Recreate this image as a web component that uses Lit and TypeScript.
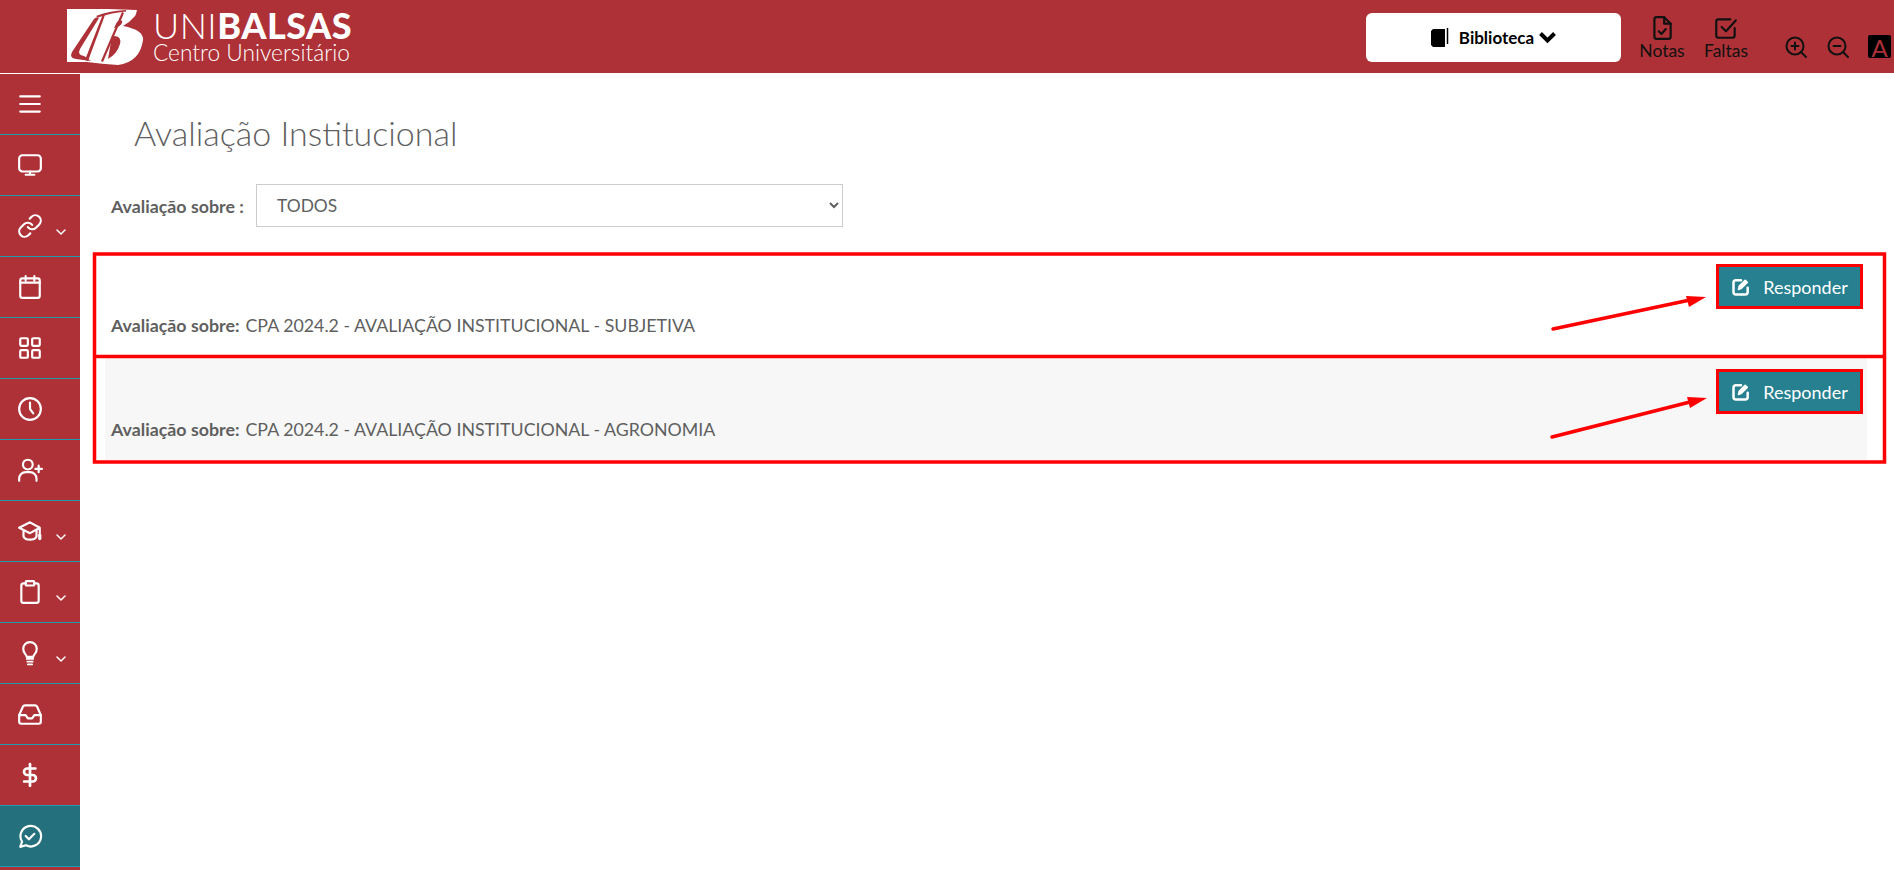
import { LitElement, html, css, svg } from 'lit';
import { customElement } from 'lit/decorators.js';

const icon = (body: unknown, size = 26) => html`<svg class="ico" width=${size} height=${size} viewBox="0 0 24 24" fill="none" stroke="currentColor" stroke-width="2" stroke-linecap="round" stroke-linejoin="round">${body}</svg>`;

const menuItems = [
  { body: svg`<path d="M3 5h18M3 12h18M3 19h18"/>` },
  { body: svg`<rect x="2" y="3" width="20" height="15" rx="3"/><path d="M12 18v3M8 21h8"/>` },
  { body: svg`<path d="M10 13a5 5 0 0 0 7.54.54l3-3a5 5 0 0 0-7.07-7.07l-1.72 1.71"/><path d="M14 11a5 5 0 0 0-7.54-.54l-3 3a5 5 0 0 0 7.07 7.07l1.71-1.71"/>`, caret: true },
  { body: svg`<rect x="3" y="4" width="18" height="18" rx="2"/><path d="M8 2v4M16 2v4M3 8h18"/>` },
  { body: svg`<rect x="3" y="3" width="7" height="7" rx="1"/><rect x="14" y="3" width="7" height="7" rx="1"/><rect x="3" y="14" width="7" height="7" rx="1"/><rect x="14" y="14" width="7" height="7" rx="1"/>` },
  { body: svg`<circle cx="12" cy="12" r="10"/><path d="M12 6v6l3 4"/>` },
  { body: svg`<circle cx="10" cy="7" r="4.5"/><path d="M2 22v-2a6 6 0 0 1 6-6h4a6 6 0 0 1 6 6v2M20 8v6M17 11h6"/>` },
  { body: svg`<path d="M21 9 12 4 2 9l10 5 9-5v7"/><path d="M6 11.5V17c2 4 10 4 12 0v-5.5"/><path d="M21 16v3" stroke-width="3"/>`, caret: true },
  { body: svg`<path d="M8 4H6a2 2 0 0 0-2 2v14a2 2 0 0 0 2 2h12a2 2 0 0 0 2-2V6a2 2 0 0 0-2-2h-2"/><rect x="8" y="2" width="8" height="4" rx="1"/>`, caret: true },
  { body: svg`<path d="M9 17.5h6M9.5 20h5M10 22.5h4" stroke-width="1.6"/><path d="M15 15.5c.2-1 .7-1.8 1.5-2.7a6.5 6.5 0 0 0 1.7-4.6A6.1 6.1 0 0 0 12 2a6.1 6.1 0 0 0-6.2 6.2c0 1.6.5 3.2 1.7 4.6.8.9 1.3 1.7 1.5 2.7z"/>`, caret: true },
  { body: svg`<path d="M22 13h-6l-2 3h-4l-2-3H2"/><path d="M5.5 5.1 2 13v6a2 2 0 0 0 2 2h16a2 2 0 0 0 2-2v-6l-3.5-7.9A2 2 0 0 0 16.7 4H7.3a2 2 0 0 0-1.8 1.1z"/>` },
  { body: svg`<path d="M12 2v20" stroke-width="2.5"/><path d="M17 6H9.5a3 3 0 0 0 0 6h5a3 3 0 0 1 0 6H6.5" stroke-width="2.5"/>` },
  { body: svg`<path d="M3 22l1.7-4.7A9.5 9.5 0 1 1 8.3 20.6z"/><path d="M8 12l3 3 5-5"/>`, active: true },
];

const rows = [
  'CPA 2024.2 - AVALIAÇÃO INSTITUCIONAL - SUBJETIVA',
  'CPA 2024.2 - AVALIAÇÃO INSTITUCIONAL - AGRONOMIA',
];

@customElement('app-root')
export class AppRoot extends LitElement {
  static styles = css`
    :host {
      display: block;
      height: 870px;
      overflow: hidden;
      position: relative;
      font-family: 'Lato', 'Noto Sans', sans-serif;
      color: #5f5f5f;
      background: #fff;
    }

    .top {
      height: 73px;
      background: #ad3137;
      display: flex;
      align-items: center;
      padding-left: 67px;
      color: #fff;
      box-sizing: border-box;
    }

    .brand {
      display: flex;
      align-items: center;
      gap: 9px;
    }

    .brand-text {
      width: 197px;
      line-height: 1;
    }

    .brand-name {
      font-size: 36px;
      font-weight: 300;
      height: 33px;
      line-height: 33px;
      letter-spacing: 0.5px;
      white-space: nowrap;
    }

    .brand-name b {
      font-weight: 900;
    }

    .brand-sub {
      font-size: 22.7px;
      font-weight: 300;
      line-height: 22px;
      white-space: nowrap;
    }

    .top-right {
      margin-left: auto;
      display: flex;
      align-items: center;
      color: #111;
    }

    .lib {
      width: 255px;
      height: 49px;
      background: #fff;
      border-radius: 6px;
      display: flex;
      align-items: center;
      justify-content: center;
      gap: 10px;
      font-weight: 700;
      font-size: 17px;
      color: #000;
      margin: 2px 9px 0 0;
    }

    .lib .chev {
      margin-left: -5px;
    }

    .quick {
      display: flex;
      flex-direction: column;
      align-items: center;
      font-size: 17.5px;
      line-height: 20px;
      width: 64px;
      margin-top: 2px;
    }

    .zoom {
      display: flex;
      align-items: center;
      gap: 18px;
      margin: 20px 3px 0 26px;
    }

    .a-box {
      width: 23px;
      height: 23px;
      background: #000;
      color: #ad3137;
      font-size: 24px;
      line-height: 25px;
      text-align: center;
      border-radius: 2px;
    }

    .body {
      display: flex;
      margin-top: 1px;
      height: 796px;
    }

    .side {
      width: 80px;
      background: #ad3137;
      color: #fff;
      flex: none;
    }

    .side-item {
      height: 60px;
      border-bottom: 1px solid #1f9db0;
      display: flex;
      align-items: center;
      padding-left: 17px;
      position: relative;
    }

    .side-item.active {
      background: #24707c;
    }

    .caret {
      position: absolute;
      left: 55px;
      top: 32px;
    }

    .main {
      flex: 1;
      min-width: 0;
      padding: 0 27px 0 25px;
    }

    h1 {
      margin: 40px 0 0 29px;
      font-weight: 300;
      font-size: 34px;
      line-height: 38px;
      color: #5f5f5f;
    }

    .filter {
      display: flex;
      align-items: center;
      margin: 32px 0 0 6px;
      gap: 12px;
    }

    label {
      width: 133px;
      white-space: nowrap;
    }

    label, .row b {
      font-weight: 700;
      font-size: 17.8px;
      color: #5f5f5f;
    }

    select {
      width: 587px;
      height: 43px;
      border: 1px solid #ccc;
      background: #fff;
      color: #5f5f5f;
      font: 400 17.4px 'Lato', sans-serif;
      padding: 0 16px;
    }

    .rows {
      margin-top: 27px;
    }

    .row {
      height: 102px;
      box-sizing: border-box;
      padding: 13px 7px 0 6px;
    }

    .row + .row {
      background: #f7f7f7;
      margin-top: 2px;
      padding-top: 14px;
    }

    .row-action {
      display: flex;
      justify-content: flex-end;
    }

    .btn {
      width: 141px;
      height: 39px;
      display: flex;
      align-items: center;
      justify-content: center;
      gap: 12px;
      background: #26808f;
      color: #fff;
      font-size: 18px;
      outline: 3px solid #f00;
    }

    .row-text {
      margin-top: 8px;
      font-size: 17.8px;
      line-height: 22px;
    }

    .row + .row .row-text {
      margin-top: 7px;
    }

    .row-text b {
      margin-right: 6px;
    }

    .marks {
      position: absolute;
      left: 0;
      top: 0;
      pointer-events: none;
    }
  `;

  render() {
    return html`
      <div class="top">
        <div class="brand">
          <svg width="77" height="56" viewBox="7 7 77 56">
            <path fill="#fff" d="M7 7H48L77 8Q76 13 75 14Q70 20 63 24Q84 28 83 38Q80 60 58 63Q42 62 27 60H7Z"/>
            <g fill="#ad3137">
              <path d="M34 17 12 50Q9 56 16 57L31 59 24 54Q17 53 20 47L39 16Q37 14 34 17Z"/>
              <path d="M43 12 45 13 28 59 25 58Z"/>
              <path d="M62 10 64 11 43 60 41 59Z"/>
              <path d="M36 14Q48 9 66 8L66 9.5Q50 11 38 15.5Z"/>
              <path d="M57 20Q63 16 62 21Q60 25 54 26Z"/>
              <path d="M52 34Q62 33 60 42Q57 52 48 57Z"/>
            </g>
          </svg>
          <div class="brand-text">
            <div class="brand-name">UNI<b>BALSAS</b></div>
            <div class="brand-sub">Centro Universitário</div>
          </div>
        </div>
        <div class="top-right">
          <div class="lib">
            <svg width="18" height="19" viewBox="0 0 18 19"><path d="M0 3 2 1H14V19H2L0 17z" fill="#000"/><path d="M16.5 0V16" stroke="#000" stroke-width="1.5"/></svg>
            <span>Biblioteca</span>
            <svg class="chev" width="17" height="13" viewBox="0 0 17 13" fill="none" stroke="#000" stroke-width="4"><path d="M1.5 2.5 8.5 9.5 15.5 2.5"/></svg>
          </div>
          <div class="quick">
            ${icon(svg`<path d="M14 2H7a2 2 0 0 0-2 2v16a2 2 0 0 0 2 2h11a2 2 0 0 0 2-2V8z"/><path d="M14 2v6h6M9 15l2.5 2.5 4-4.5"/>`)}
            <span>Notas</span>
          </div>
          <div class="quick">
            ${icon(svg`<path d="M20 12v7a2 2 0 0 1-2 2H5a2 2 0 0 1-2-2V6a2 2 0 0 1 2-2h11"/><path d="M8 11l4 4 9-10"/>`)}
            <span>Faltas</span>
          </div>
          <div class="zoom">
            ${icon(svg`<circle cx="11" cy="11" r="8.5"/><path d="M22 22l-5-5M11 7.5v7M7.5 11h7"/>`, 24)}
            ${icon(svg`<circle cx="11" cy="11" r="8.5"/><path d="M22 22l-5-5M7.5 11h7"/>`, 24)}
            <div class="a-box">A</div>
          </div>
        </div>
      </div>
      <div class="body">
        <nav class="side">
          ${menuItems.map((m) => html`
            <div class="side-item ${m.active ? 'active' : ''}">
              ${icon(m.body)}
              ${m.caret ? html`<svg class="caret" width="12" height="8" viewBox="0 0 12 8" fill="none" stroke="#fff" stroke-width="1.5" stroke-linecap="round" stroke-linejoin="round"><path d="M2 2l4 4 4-4"/></svg>` : ''}
            </div>`)}
        </nav>
        <main class="main">
          <h1>Avaliação Institucional</h1>
          <div class="filter">
            <label>Avaliação sobre :</label>
            <select><option>TODOS</option></select>
          </div>
          <div class="rows">
            ${rows.map((r) => html`
              <div class="row">
                <div class="row-action">
                  <div class="btn">
                    ${icon(svg`<path d="M20 13v5a3 3 0 0 1-3 3H6a3 3 0 0 1-3-3V7a3 3 0 0 1 3-3h6" stroke-width="3"/><path d="M9 15l1-4 7-7 2.5 2.5-7 7z" fill="currentColor"/>`, 20)}
                    <span>Responder</span>
                  </div>
                </div>
                <div class="row-text"><b>Avaliação sobre:</b>${r}</div>
              </div>`)}
          </div>
        </main>
      </div>
      <svg class="marks" width="1894" height="870" viewBox="0 0 1894 870" fill="none" stroke="#f00">
        <rect x="94.5" y="254" width="1790" height="208" stroke-width="3.5"/>
        <path d="M93 356.5H1885" stroke-width="3.5"/>
        <path d="M1553 329 1690 300" stroke-width="3.5" stroke-linecap="round"/>
        <path d="M1706 297 1686 296 1689 307z" fill="#f00" stroke="none"/>
        <path d="M1552 437 1690 402" stroke-width="3.5" stroke-linecap="round"/>
        <path d="M1707 398 1687 397 1690 408z" fill="#f00" stroke="none"/>
      </svg>
    `;
  }
}
